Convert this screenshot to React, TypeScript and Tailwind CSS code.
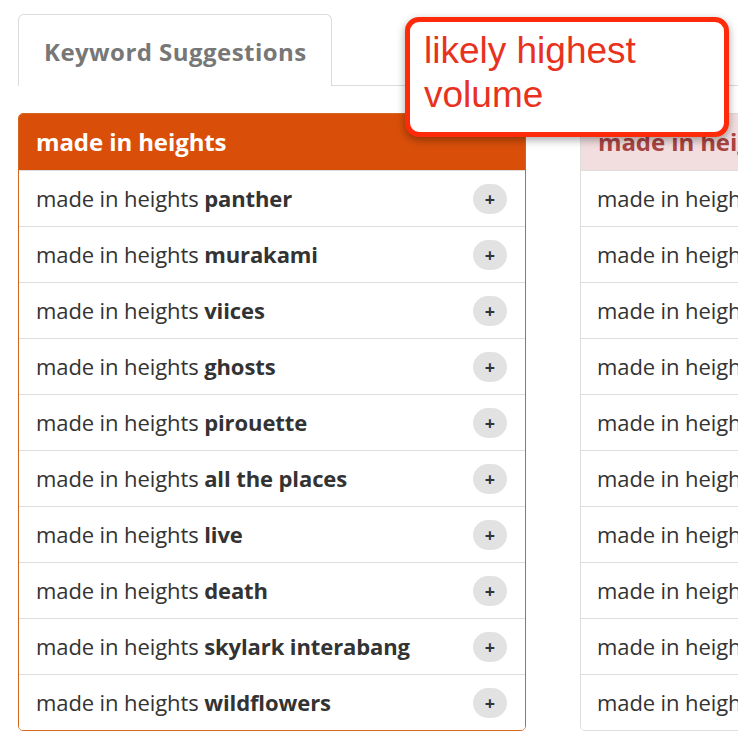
import React from "react";

const rows: string[] = [
  "panther",
  "murakami",
  "viices",
  "ghosts",
  "pirouette",
  "all the places",
  "live",
  "death",
  "skylark interabang",
  "wildflowers",
];

const ui = { fontFamily: '"Open Sans", "Noto Sans", sans-serif' };

export default function App() {
  return (
    <div className="relative w-[738px] h-[738px] overflow-hidden bg-white" style={ui}>
      {/* Tabs */}
      <div className="flex pt-[14px] pl-[18px]">
        <div className="w-[314px] h-[72px] border border-b-0 border-[#dcdcdc] rounded-t-[6px] flex items-center pl-[25px] pt-[2px]">
          <span className="text-[24px] font-bold text-[#777777] tracking-[0.45px]">Keyword Suggestions</span>
        </div>
        <div className="flex-1 border-b border-[#dcdcdc]" />
      </div>

      {/* Cards */}
      <div className="flex gap-[54px] pl-[18px] mt-[27px]">
        <div className="w-[508px] shrink-0 border border-[#d2661f] rounded-[5px] overflow-hidden">
          <div className="h-[56px] bg-[#d94f0a] flex items-center pl-[17px]">
            <span className="text-[24px] font-bold text-white tracking-[-0.1px]">made in heights</span>
          </div>
          {rows.map((r) => (
            <div key={r} className="h-[56px] border-t border-[#dedede] flex items-center justify-between pl-[17px] pr-[18px] bg-white">
              <span className="text-[22px] text-[#333333] tracking-[-0.1px]">
                made in heights <b className="font-bold">{r}</b>
              </span>
              <span className="w-[34px] h-[30px] rounded-full bg-[#e2e2e2] flex items-center justify-center text-[18px] font-bold text-[#333333] leading-none">
                +
              </span>
            </div>
          ))}
        </div>

        <div className="w-[508px] shrink-0 border border-[#dddddd] rounded-[5px] overflow-hidden">
          <div className="h-[56px] bg-[#f2dede] flex items-center pl-[17px]">
            <span className="text-[24px] font-bold text-[#a94442] tracking-[-0.1px] whitespace-nowrap">made in heights</span>
          </div>
          {rows.map((r) => (
            <div key={r} className="h-[56px] border-t border-[#dedede] flex items-center pl-[16px] bg-white">
              <span className="text-[22px] text-[#333333] tracking-[-0.1px] whitespace-nowrap">
                made in heights <b className="font-bold">{r}</b>
              </span>
            </div>
          ))}
        </div>
      </div>

      {/* Callout */}
      <div className="absolute left-[405px] top-[17px] w-[324px] h-[120px] bg-white border-[5px] border-[#ff2a0a] rounded-[14px] shadow-[0_3px_8px_rgba(0,0,0,0.35)] pl-[14px] pt-[7px]">
        <div
          className="text-[37px] leading-[44px] text-[#e8321e]"
          style={{ fontFamily: '"Liberation Sans", Arial, sans-serif' }}
        >
          likely highest
          <br />
          volume
        </div>
      </div>
    </div>
  );
}
